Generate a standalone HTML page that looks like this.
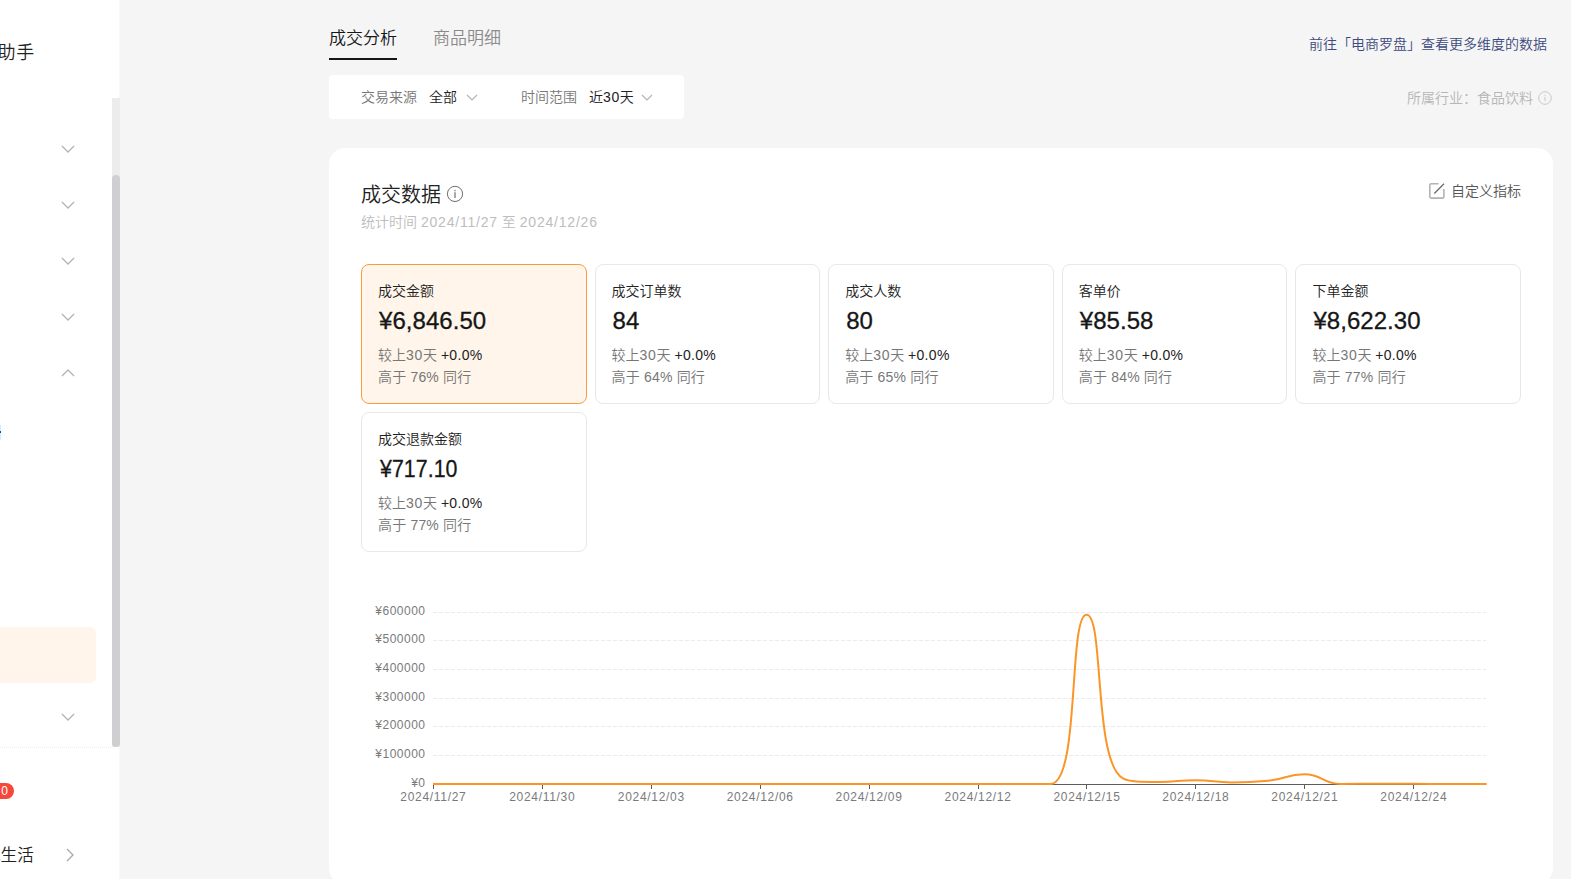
<!DOCTYPE html>
<html lang="zh-CN">
<head>
<meta charset="utf-8">
<title>成交分析</title>
<style>
*{box-sizing:border-box;margin:0;padding:0}
html,body{width:1571px;height:879px;overflow:hidden}
body{background:#f5f5f5;font-family:"Liberation Sans","Noto Sans CJK SC",sans-serif;color:#222;position:relative;font-size:14px;font-weight:350}
.abs{position:absolute;white-space:nowrap}
/* sidebar */
#side{position:absolute;left:0;top:0;width:120px;height:879px;background:#fff}
#track{position:absolute;left:112px;top:98px;width:8px;height:649px;background:#ececec}
#thumb{position:absolute;left:112px;top:175px;width:8px;height:572px;background:#cfcfd1;border-radius:4px}
#sideline{position:absolute;left:0;top:747px;width:112px;height:1px;background:repeating-linear-gradient(90deg,#ececec 0 1px,#fff 1px 2px)}
#sidev{position:absolute;left:119px;top:0;width:1px;height:879px;background:repeating-linear-gradient(180deg,#f3f3f3 0 1px,#fff 1px 2px)}
.chev{position:absolute;width:14px;height:8px}
#active{position:absolute;left:-10px;top:627px;width:106px;height:56px;background:#fff5ea;border-radius:6px}
#badge{position:absolute;left:-12px;top:783px;width:26px;height:16px;border-radius:8px;background:#f5483b;color:#fff;font-size:12px;line-height:16px;text-align:right;padding-right:6px;font-weight:normal}
/* top */
.tab{font-size:17px;line-height:24px}
#filter{position:absolute;left:329px;top:75px;width:355px;height:44px;background:#fff;border-radius:4px}
#card{position:absolute;left:329px;top:148px;width:1224px;height:736px;background:#fff;border-radius:16px}
.m{position:absolute;width:225.6px;height:140px;border:1px solid #e8e8e8;border-radius:8px;background:#fff}
.m.on{background:#fff5ea;border-color:#f89c3a}
.m .l{position:absolute;left:16px;top:16px;font-size:14px;line-height:20px;color:#222;white-space:nowrap}
.m .v{position:absolute;left:17px;top:40px;font-size:24px;line-height:32px;color:#161616;font-weight:normal;-webkit-text-stroke:0.3px #161616;letter-spacing:0.05px;white-space:nowrap}
.m .c{position:absolute;left:16px;top:80px;font-size:14px;line-height:20px;color:#777;white-space:nowrap}
.m .c b{font-weight:normal;color:#222}
.n{letter-spacing:0.8px}
.m .c i{font-style:normal;letter-spacing:0.7px}
.m .c b{letter-spacing:0.3px}
.m .p{letter-spacing:0.18px;position:absolute;left:16px;top:102px;font-size:14px;line-height:20px;color:#777;white-space:nowrap}
</style>
</head>
<body>
<div id="side">
  <div class="abs" style="left:-21px;top:39.6px;font-size:18px;line-height:26px;color:#222;letter-spacing:0.6px">小助手</div>
  <div id="sidev"></div><div id="track"></div><div id="thumb"></div>
  <svg class="chev" style="left:61px;top:145px" viewBox="0 0 14 8"><path d="M1 1l6 6 6-6" fill="none" stroke="#b2b2b8" stroke-width="1.3"/></svg>
  <svg class="chev" style="left:61px;top:201px" viewBox="0 0 14 8"><path d="M1 1l6 6 6-6" fill="none" stroke="#b2b2b8" stroke-width="1.3"/></svg>
  <svg class="chev" style="left:61px;top:257px" viewBox="0 0 14 8"><path d="M1 1l6 6 6-6" fill="none" stroke="#b2b2b8" stroke-width="1.3"/></svg>
  <svg class="chev" style="left:61px;top:313px" viewBox="0 0 14 8"><path d="M1 1l6 6 6-6" fill="none" stroke="#b2b2b8" stroke-width="1.3"/></svg>
  <svg class="chev" style="left:61px;top:369px" viewBox="0 0 14 8"><path d="M1 7l6-6 6 6" fill="none" stroke="#b2b2b8" stroke-width="1.3"/></svg>
  <div id="active"></div>
  <div class="abs" style="left:0;top:425px;width:1px;height:15px;background:#cdeefa"></div><div class="abs" style="left:0;top:431px;width:1px;height:2px;background:#0b4f9e"></div>
  <svg class="chev" style="left:61px;top:713px" viewBox="0 0 14 8"><path d="M1 1l6 6 6-6" fill="none" stroke="#b2b2b8" stroke-width="1.3"/></svg>
  <div id="sideline"></div>
  <div id="badge">0</div>
  <div class="abs" style="left:-16px;top:843px;font-size:16.6px;line-height:26px;color:#222">地生活</div>
  <svg class="abs" style="left:66px;top:848px;width:8px;height:14px" viewBox="0 0 8 14"><path d="M1 1l6 6-6 6" fill="none" stroke="#a8a8a8" stroke-width="1.3"/></svg>
</div>

<div class="abs tab" style="left:329px;top:27px;color:#161616">成交分析</div>
<div class="abs" style="left:329px;top:58px;width:68px;height:2px;background:#161616"></div>
<div class="abs tab" style="left:433px;top:27px;color:#8a8a8a">商品明细</div>
<div class="abs" style="right:24px;top:34px;font-size:14px;line-height:20px;color:#3c4a80">前往「电商罗盘」查看更多维度的数据</div>
<div class="abs" style="right:38px;top:88px;font-size:14px;line-height:20px;color:#b6b6b6">所属行业：食品饮料</div>
<svg class="abs" style="left:1538px;top:91px;width:14px;height:14px" viewBox="0 0 14 14"><circle cx="7" cy="7" r="6.3" fill="none" stroke="#c8c8c8" stroke-width="1"/><path d="M7 6v4.2M7 3.8v1" stroke="#c8c8c8" stroke-width="1"/></svg>

<div id="filter">
  <div class="abs" style="left:32px;top:13px;font-size:14px;line-height:18px;color:#777">交易来源</div>
  <div class="abs" style="left:100px;top:13px;font-size:14px;line-height:18px;color:#222">全部</div>
  <svg class="abs" style="left:137px;top:19px;width:12px;height:7px" viewBox="0 0 12 7"><path d="M1 1l5 5 5-5" fill="none" stroke="#b4b4b4" stroke-width="1.2"/></svg>
  <div class="abs" style="left:192px;top:13px;font-size:14px;line-height:18px;color:#777">时间范围</div>
  <div class="abs" style="left:260px;top:13px;font-size:14px;line-height:18px;color:#222">近<span style="letter-spacing:0.6px">30</span>天</div>
  <svg class="abs" style="left:312px;top:19px;width:12px;height:7px" viewBox="0 0 12 7"><path d="M1 1l5 5 5-5" fill="none" stroke="#b4b4b4" stroke-width="1.2"/></svg>
</div>

<div id="card">
  <div class="abs" style="left:32px;top:33px;font-size:20px;line-height:28px;color:#222">成交数据</div>
  <svg class="abs" style="left:117px;top:37px;width:18px;height:18px" viewBox="0 0 18 18"><circle cx="9" cy="8.9" r="7.6" fill="none" stroke="#6f6f6f" stroke-width="1"/><path d="M9 7.2v5.8M9 4.9v1.3" stroke="#6f6f6f" stroke-width="1.2"/></svg>
  <div class="abs" style="left:32px;top:64px;font-size:14px;line-height:20px;color:#bdbdbd">统计时间 <span class="n">2024/11/27</span> 至 <span class="n">2024/12/26</span></div>
  <svg class="abs" style="left:1099px;top:34px;width:18px;height:18px" viewBox="0 0 18 18"><path d="M10.6 1.8H3.3a1.5 1.5 0 0 0-1.5 1.5v11.3a1.5 1.5 0 0 0 1.5 1.5H14.4a1.5 1.5 0 0 0 1.5-1.5V7" fill="none" stroke="#b3b3b7" stroke-width="1.6"/><path d="M16 1.8L6.3 11.5" stroke="#6a6a6a" stroke-width="1.3"/></svg>
  <div class="abs" style="left:1122px;top:33px;font-size:14px;line-height:20px;color:#555">自定义指标</div>

  <div class="m on" style="left:32px;top:116px"><div class="l">成交金额</div><div class="v">¥6,846.50</div><div class="c">较上<i>30</i>天 <b>+0.0%</b></div><div class="p">高于 76% 同行</div></div>
  <div class="m" style="left:265.6px;top:116px"><div class="l">成交订单数</div><div class="v">84</div><div class="c">较上<i>30</i>天 <b>+0.0%</b></div><div class="p">高于 64% 同行</div></div>
  <div class="m" style="left:499.2px;top:116px"><div class="l">成交人数</div><div class="v">80</div><div class="c">较上<i>30</i>天 <b>+0.0%</b></div><div class="p">高于 65% 同行</div></div>
  <div class="m" style="left:732.8px;top:116px"><div class="l">客单价</div><div class="v">¥85.58</div><div class="c">较上<i>30</i>天 <b>+0.0%</b></div><div class="p">高于 84% 同行</div></div>
  <div class="m" style="left:966.4px;top:116px"><div class="l">下单金额</div><div class="v">¥8,622.30</div><div class="c">较上<i>30</i>天 <b>+0.0%</b></div><div class="p">高于 77% 同行</div></div>
  <div class="m" style="left:32px;top:264px"><div class="l">成交退款金额</div><div class="v" style="transform:scaleX(0.89);transform-origin:0 50%;left:18px">¥717.10</div><div class="c">较上<i>30</i>天 <b>+0.0%</b></div><div class="p">高于 77% 同行</div></div>
</div>
<svg id="chart" class="abs" style="left:0;top:0;width:1571px;height:879px" viewBox="0 0 1571 879">
<path d="M433 612.5H1486" stroke="#ebebeb" stroke-width="1" stroke-dasharray="4 2"/>
<path d="M433 640.5H1486" stroke="#ebebeb" stroke-width="1" stroke-dasharray="4 2"/>
<path d="M433 669.5H1486" stroke="#ebebeb" stroke-width="1" stroke-dasharray="4 2"/>
<path d="M433 698.5H1486" stroke="#ebebeb" stroke-width="1" stroke-dasharray="4 2"/>
<path d="M433 726.5H1486" stroke="#ebebeb" stroke-width="1" stroke-dasharray="4 2"/>
<path d="M433 755.5H1486" stroke="#ebebeb" stroke-width="1" stroke-dasharray="4 2"/>
<path d="M433 784.5H1486" stroke="#5c5c5c" stroke-width="1"/>
<path d="M433.5 784V789M542.5 784V789M651.5 784V789M760.5 784V789M869.5 784V789M978.5 784V789M1086.5 784V789M1195.5 784V789M1304.5 784V789M1413.5 784V789" stroke="#5c5c5c" stroke-width="1"/>
<g font-family="Liberation Sans, sans-serif" font-size="12" fill="#7a7a7a" letter-spacing="0.5">
<text x="425.5" y="615.0" text-anchor="end">¥600000</text>
<text x="425.5" y="643.0" text-anchor="end">¥500000</text>
<text x="425.5" y="672.0" text-anchor="end">¥400000</text>
<text x="425.5" y="701.0" text-anchor="end">¥300000</text>
<text x="425.5" y="729.0" text-anchor="end">¥200000</text>
<text x="425.5" y="758.0" text-anchor="end">¥100000</text>
<text x="425.5" y="787.0" text-anchor="end">¥0</text>
</g>
<g font-family="Liberation Sans, sans-serif" font-size="12" fill="#7a7a7a" letter-spacing="0.7">
<text x="433.4" y="801" text-anchor="middle">2024/11/27</text>
<text x="542.3" y="801" text-anchor="middle">2024/11/30</text>
<text x="651.3" y="801" text-anchor="middle">2024/12/03</text>
<text x="760.2" y="801" text-anchor="middle">2024/12/06</text>
<text x="869.1" y="801" text-anchor="middle">2024/12/09</text>
<text x="978.1" y="801" text-anchor="middle">2024/12/12</text>
<text x="1087.0" y="801" text-anchor="middle">2024/12/15</text>
<text x="1195.9" y="801" text-anchor="middle">2024/12/18</text>
<text x="1304.8" y="801" text-anchor="middle">2024/12/21</text>
<text x="1413.8" y="801" text-anchor="middle">2024/12/24</text>
</g>
<path d="M433 784L1014 784C1032.1 784.0 1044.0 784.0 1050.3 784.0C1080.3 784.0 1068.1 614.8 1086.6 614.8C1104.4 614.8 1093.1 761.9 1122.9 778.4C1129.4 782.0 1141.0 782.0 1159.2 782.0C1177.3 782.0 1177.4 780.2 1195.5 780.2C1213.7 780.2 1213.7 782.5 1231.8 782.5C1250.0 782.5 1250.1 782.5 1268.1 780.8C1286.4 779.1 1286.5 774.3 1304.4 774.3C1322.8 774.3 1322.3 783.9 1340.8 783.9C1358.6 783.9 1358.9 783.7 1377.1 783.7C1395.2 783.7 1395.2 783.7 1413.4 783.8C1431.5 783.9 1431.5 784.0 1449.7 784.0C1467.8 784.0 1486.0 784.0 1486.0 784.0L1486.7 784" fill="none" stroke="#fa9628" stroke-width="2" stroke-linejoin="round"/>
</svg>
</body>
</html>
